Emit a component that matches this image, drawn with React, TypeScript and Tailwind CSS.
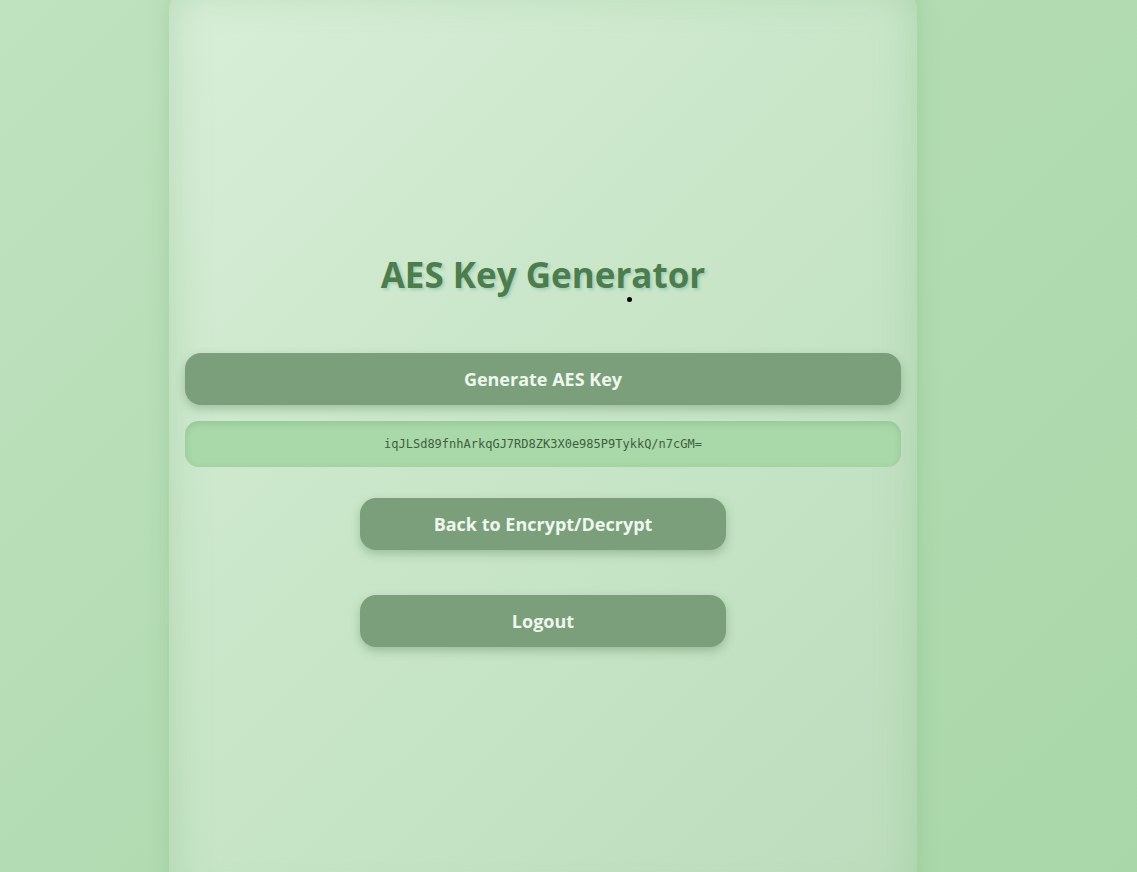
import React from "react";

export default function App() {
  return (
    <div className="relative min-h-screen w-full overflow-hidden bg-[linear-gradient(135deg,#bfe2bf_0%,#b2dbb2_50%,#a9d7a9_100%)] [font-family:'Open_Sans','Noto_Sans',sans-serif]">
      <div className="ml-[169px] -mt-[12px] h-[920px] w-[748px] rounded-[22px] bg-[linear-gradient(135deg,#d8eed8_0%,#c9e6c9_45%,#bcdcbc_100%)] px-4 pt-[265px] shadow-[inset_0_0_40px_rgba(120,180,120,0.35),0_0_20px_rgba(100,160,100,0.25)]">
        <h1 className="text-center text-[35px] font-bold leading-[44px] text-[#4d7c4d] [text-shadow:2px_2px_3px_rgba(60,150,140,0.28)]">
          AES Key Generator
        </h1>
        <div className="mt-[56px] flex flex-col">
          <button className="h-[52px] w-full rounded-[16px] bg-[#7b9e7b] text-[18px] font-bold text-[#eef7ee] shadow-[0_4px_10px_rgba(60,100,60,0.3)]">
            Generate AES Key
          </button>
          <div className="mt-[16px] flex h-[46px] w-full items-center justify-center rounded-[14px] bg-[#a9d8a9] text-[12px] text-[#3f5f3f] shadow-[inset_0_2px_6px_rgba(80,140,80,0.25)] [font-family:'DejaVu_Sans_Mono',monospace]">
            iqJLSd89fnhArkqGJ7RD8ZK3X0e985P9TykkQ/n7cGM=
          </div>
          <div className="mt-[31px] flex flex-col items-center gap-[45px]">
            <button className="h-[52px] w-[366px] rounded-[16px] bg-[#7b9e7b] text-[18px] font-bold text-[#eef7ee] shadow-[0_4px_10px_rgba(60,100,60,0.3)]">
              Back to Encrypt/Decrypt
            </button>
            <button className="h-[52px] w-[366px] rounded-[16px] bg-[#7b9e7b] text-[18px] font-bold text-[#eef7ee] shadow-[0_4px_10px_rgba(60,100,60,0.3)]">
              Logout
            </button>
          </div>
        </div>
      </div>
      <div className="absolute left-[627px] top-[297px] h-[5px] w-[5px] rounded-full bg-black" />
    </div>
  );
}
